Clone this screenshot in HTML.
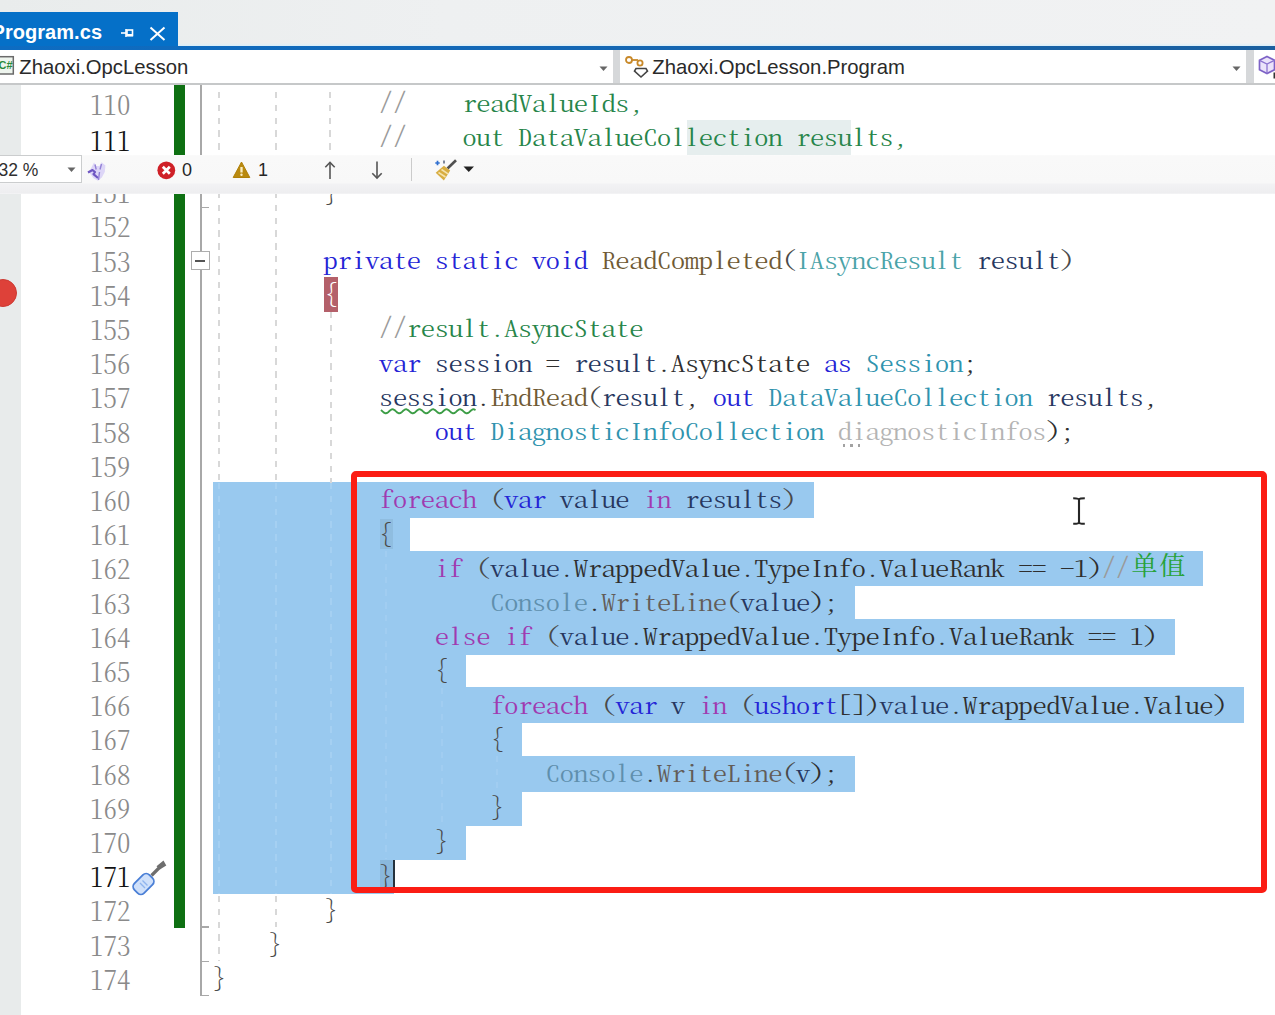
<!DOCTYPE html>
<html><head><meta charset="utf-8"><title>Program.cs</title>
<style>
html,body{margin:0;padding:0}
body{width:1275px;height:1015px;overflow:hidden;position:relative;background:#fff;font-family:"Liberation Sans","Noto Sans CJK SC",sans-serif}
.a{position:absolute}
.cl,.ln{position:absolute;white-space:pre;font-family:"Noto Serif CJK SC","Liberation Mono",monospace;font-feature-settings:"hwid";font-kerning:none;font-weight:300;font-size:23.0px;line-height:34.2px;height:34.2px;transform:scaleX(1.27000);transform-origin:0 0;letter-spacing:-0.5551px}
.cl{left:212.1px}
.sl{position:relative;top:-3px}
.cl i{font-style:normal;display:inline-block;transform:translateY(-0.8px) scaleY(0.91);transform-origin:0 0}
.br{display:inline-block;transform:translate(1.5px,-2.2px) scale(0.76,1.09);transform-origin:0 50%}
.ln{left:90.2px;color:#8a8a8a;font-size:26.0px;transform:scaleX(1.03462);letter-spacing:0}
.sel{position:absolute;background:#99c9ef}
.gd{position:absolute;width:2px}
</style></head><body>

<div class="a" style="left:0;top:0;width:1275px;height:46px;background:linear-gradient(90deg,#e9ecec 0%,#eef0f1 35%,#f1f2f3 100%)"></div>
<div class="a" style="left:0;top:12px;width:177.6px;height:35px;background:#0570c8"></div>
<div class="a" style="left:0;top:45.5px;width:1275px;height:4.5px;background:linear-gradient(90deg,#0d6cc2 0%,#1467b4 45%,#1a5f9f 100%)"></div>
<div class="a" style="left:-8.5px;top:17.5px;font-weight:bold;font-size:20px;line-height:28px;color:#fff;white-space:pre;letter-spacing:0.05px">Program.cs</div>
<div class="a" style="left:177.600px;top:42.500px;width:1098px;height:3px;background:linear-gradient(180deg,rgba(222,240,250,0) 0%,#d9eef9 100%)"></div>
<svg class="a" style="left:119px;top:25px" width="18" height="16" viewBox="0 0 18 16"><g fill="none" stroke="#fff" stroke-width="1.6"><path d="M2 8h5"/><path d="M7 4v8"/><rect x="8" y="5" width="5.5" height="5.5" fill="none"/><path d="M8 10.2h6" stroke-width="2.4"/></g></svg>
<svg class="a" style="left:149px;top:26px" width="18" height="16" viewBox="0 0 18 16"><g fill="none" stroke="#fff" stroke-width="2"><path d="M1.5 1.5l14 12.5M15.5 1.5l-14 12.5"/></g></svg>
<div class="a" style="left:0;top:49.5px;width:1275px;height:34px;background:#d6d8da"></div>
<div class="a" style="left:0;top:50px;width:612.6px;height:33px;background:#fff"></div>
<div class="a" style="left:619.5px;top:50px;width:626px;height:33px;background:#fff"></div>
<div class="a" style="left:1253.5px;top:50px;width:22px;height:33px;background:#fff"></div>
<div class="a" style="left:0;top:83px;width:1275px;height:2.2px;background:#c6c8c9"></div>
<svg class="a" style="left:-3.5px;top:55px" width="19" height="22" viewBox="0 0 19 22"><rect x="0.700" y="1.700" width="15.600" height="17.300" fill="#eef5ee" stroke="#6a6a6a" stroke-width="1.500"/><text x="1.500" y="14.200" font-family="Liberation Sans,sans-serif" font-weight="bold" font-size="11" fill="#2c8a3c">C#</text></svg>
<div class="a" id="nav1" style="left:19.3px;top:53px;font-size:20.3px;line-height:28px;color:#2a2a2a;white-space:pre;transform-origin:0 0">Zhaoxi.OpcLesson</div>
<div class="a" id="nav2" style="left:652.3px;top:53px;font-size:20.3px;line-height:28px;color:#2a2a2a;white-space:pre;transform-origin:0 0">Zhaoxi.OpcLesson.Program</div>
<svg class="a" style="left:598.3px;top:64.700px" width="12" height="8" viewBox="0 0 12 8"><path d="M1.5 1.5h8l-4 4.5z" fill="#666"/></svg>
<svg class="a" style="left:1231.300px;top:64.800px" width="12" height="8" viewBox="0 0 12 8"><path d="M1.5 1.5h8l-4 4.5z" fill="#666"/></svg>
<svg class="a" style="left:624px;top:54px" width="26" height="26" viewBox="0 0 26 26"><g fill="none" stroke="#c8892a" stroke-width="1.8"><circle cx="5" cy="6" r="3"/><path d="M8 6h6"/><circle cx="16" cy="9" r="2.6"/></g><path d="M12 14.5h10l1.5 2.5-6.5 6-6.500-6z" fill="#fff" stroke="#444" stroke-width="1.6"/></svg>
<svg class="a" style="left:1257.500px;top:55px" width="20" height="26" viewBox="0 0 20 26"><path d="M9 1.500l7.500 3.800v9.400l-7.500 3.800-7.500-3.800V5.300z" fill="#ebe3fa" stroke="#7d62c6" stroke-width="1.700"/><path d="M1.500 5.300l7.500 3.800 7.500-3.800M9 9.100v9.400" fill="none" stroke="#8d74d0" stroke-width="1.300"/><rect x="15.500" y="17.500" width="5" height="6" fill="#333"/></svg>
<div class="a" style="left:0;top:85px;width:20.500px;height:930px;background:#e8ebeb"></div>
<div class="sel" style="left:213.0px;top:482.2px;width:600.5px;height:35.8px"></div>
<div class="sel" style="left:213.0px;top:516.4px;width:197.4px;height:35.8px"></div>
<div class="sel" style="left:213.0px;top:550.6px;width:989.7px;height:35.8px"></div>
<div class="sel" style="left:213.0px;top:584.8px;width:642.2px;height:35.8px"></div>
<div class="sel" style="left:213.0px;top:619.0px;width:961.9px;height:35.8px"></div>
<div class="sel" style="left:213.0px;top:653.2px;width:253.0px;height:35.8px"></div>
<div class="sel" style="left:213.0px;top:687.4px;width:1031.4px;height:35.8px"></div>
<div class="sel" style="left:213.0px;top:721.6px;width:308.6px;height:35.8px"></div>
<div class="sel" style="left:213.0px;top:755.8px;width:642.2px;height:35.8px"></div>
<div class="sel" style="left:213.0px;top:790.0px;width:308.6px;height:35.8px"></div>
<div class="sel" style="left:213.0px;top:824.2px;width:253.0px;height:35.8px"></div>
<div class="sel" style="left:213.0px;top:858.4px;width:181.1px;height:35.8px"></div>
<div class="gd" style="left:217.5px;top:92.0px;height:60.0px;background:repeating-linear-gradient(180deg,#d8d8d8 0,#d8d8d8 6.4px,transparent 6.4px,transparent 12.8px)"></div>
<div class="gd" style="left:274.5px;top:92.0px;height:60.0px;background:repeating-linear-gradient(180deg,#d8d8d8 0,#d8d8d8 6.4px,transparent 6.4px,transparent 12.8px)"></div>
<div class="gd" style="left:329.0px;top:92.0px;height:60.0px;background:repeating-linear-gradient(180deg,#d8d8d8 0,#d8d8d8 6.4px,transparent 6.4px,transparent 12.8px)"></div>
<div class="gd" style="left:217.5px;top:192.0px;height:290.6px;background:repeating-linear-gradient(180deg,#d8d8d8 0,#d8d8d8 6.4px,transparent 6.4px,transparent 12.8px)"></div>
<div class="gd" style="left:217.5px;top:482.6px;height:411.6px;background:repeating-linear-gradient(180deg,#a5d0f2 0,#a5d0f2 6.4px,transparent 6.4px,transparent 12.8px)"></div>
<div class="gd" style="left:217.5px;top:896.2px;height:65.2px;background:repeating-linear-gradient(180deg,#d8d8d8 0,#d8d8d8 6.4px,transparent 6.4px,transparent 12.8px)"></div>
<div class="gd" style="left:274.5px;top:192.0px;height:290.6px;background:repeating-linear-gradient(180deg,#d8d8d8 0,#d8d8d8 6.4px,transparent 6.4px,transparent 12.8px)"></div>
<div class="gd" style="left:274.5px;top:482.6px;height:411.6px;background:repeating-linear-gradient(180deg,#a5d0f2 0,#a5d0f2 6.4px,transparent 6.4px,transparent 12.8px)"></div>
<div class="gd" style="left:274.5px;top:896.2px;height:31.0px;background:repeating-linear-gradient(180deg,#d8d8d8 0,#d8d8d8 6.4px,transparent 6.4px,transparent 12.8px)"></div>
<div class="gd" style="left:329.5px;top:311.6px;height:171.0px;background:repeating-linear-gradient(180deg,#d8d8d8 0,#d8d8d8 6.4px,transparent 6.4px,transparent 12.8px)"></div>
<div class="gd" style="left:329.5px;top:482.6px;height:411.6px;background:repeating-linear-gradient(180deg,#a5d0f2 0,#a5d0f2 6.4px,transparent 6.4px,transparent 12.8px)"></div>
<div class="gd" style="left:385.0px;top:551.0px;height:307.8px;background:repeating-linear-gradient(180deg,#a1cdf1 0,#a1cdf1 6.4px,transparent 6.4px,transparent 12.8px)"></div>
<div class="gd" style="left:440.5px;top:687.8px;height:136.8px;background:repeating-linear-gradient(180deg,#a1cdf1 0,#a1cdf1 6.4px,transparent 6.4px,transparent 12.8px)"></div>
<div class="gd" style="left:496.0px;top:756.2px;height:34.2px;background:repeating-linear-gradient(180deg,#a1cdf1 0,#a1cdf1 6.4px,transparent 6.4px,transparent 12.8px)"></div>
<div class="a" style="left:174.400px;top:85.300px;width:10.400px;height:70px;background:#0e7012"></div>
<div class="a" style="left:174.400px;top:191px;width:10.400px;height:736.900px;background:#0e7012"></div>
<div class="a" style="left:199.500px;top:85.300px;width:2.200px;height:70px;background:#a8a8a8"></div>
<div class="a" style="left:199.5px;top:191px;width:2.2px;height:805.1px;background:#a8a8a8"></div>
<div class="a" style="left:200px;top:206.5px;width:9px;height:1.7px;background:#a8a8a8"></div>
<div class="a" style="left:200px;top:926.4px;width:9px;height:1.7px;background:#a8a8a8"></div>
<div class="a" style="left:200px;top:960.6px;width:9px;height:1.7px;background:#a8a8a8"></div>
<div class="a" style="left:200px;top:994.8px;width:9px;height:1.7px;background:#a8a8a8"></div>
<div class="a" style="left:191px;top:250.7px;width:16.6px;height:17.2px;background:#fff;border:1.5px solid #adadad"></div>
<div class="a" style="left:194.5px;top:259.6px;width:10.8px;height:2.2px;background:#555"></div>
<div class="a" style="left:323.5px;top:277.4px;width:14.5px;height:34.2px;background:#b4606a"></div>
<div class="a" style="left:687px;top:120px;width:164px;height:35px;background:#e6eeee"></div>
<div class="a" style="left:379.500px;top:860.3px;width:13.500px;height:31.2px;background:#8ab8dc"></div>
<div class="a" style="left:379.500px;top:518.8px;width:13.500px;height:30.2px;background:#8fbde0"></div>
<div class="cl" style="top:85.95px">            <span class="sl" style="color:#9a9a9a">//</span><span style="color:#27854a">    readValueIds,</span></div>
<div class="cl" style="top:120.15px">            <span class="sl" style="color:#9a9a9a">//</span><span style="color:#27854a">    out DataValueCollection results,</span></div>
<div class="cl" style="top:174.55px">        <span class="br" style="color:#4a4a4a">}</span></div>
<div class="cl" style="top:242.95px"><span style="color:#2424d6">        private static void </span><span style="color:#6f5a34">ReadCompleted</span><span style="color:#4a4a4a"><i>(</i></span><span style="color:#4aa3a8">IAsyncResult</span><span style="color:#27375f"> result</span><span style="color:#4a4a4a"><i>)</i></span></div>
<div class="cl" style="top:277.15px">        <span class="br" style="color:#ffffff">{</span></div>
<div class="cl" style="top:311.35px">            <span class="sl" style="color:#9a9a9a">//</span><span style="color:#27854a">result.AsyncState</span></div>
<div class="cl" style="top:345.55px"><span style="color:#2424d6">            var </span><span style="color:#27375f">session</span><span style="color:#2e2e2e"> = </span><span style="color:#27375f">result</span><span style="color:#2e2e2e">.AsyncState </span><span style="color:#2424d6">as </span><span style="color:#2f93ae">Session</span><span style="color:#2e2e2e">;</span></div>
<div class="cl" style="top:379.75px"><span style="color:#27375f">            session</span><span style="color:#2e2e2e">.</span><span style="color:#6f5a34">EndRead</span><span style="color:#4a4a4a"><i>(</i></span><span style="color:#27375f">result</span><span style="color:#2e2e2e">, </span><span style="color:#2424d6">out </span><span style="color:#2f93ae">DataValueCollection </span><span style="color:#27375f">results</span><span style="color:#2e2e2e">,</span></div>
<div class="cl" style="top:413.95px"><span style="color:#2424d6">                out </span><span style="color:#2f93ae">DiagnosticInfoCollection </span><span style="color:#b4b4b4">diagnosticInfos</span><span style="color:#2e2e2e"><i>)</i>;</span></div>
<div class="cl" style="top:482.35px"><span style="color:#a03ab0">            foreach </span><span style="color:#4a4a4a"><i>(</i></span><span style="color:#2424d6">var </span><span style="color:#27375f">value </span><span style="color:#a03ab0">in </span><span style="color:#27375f">results</span><span style="color:#4a4a4a"><i>)</i></span></div>
<div class="cl" style="top:516.55px">            <span class="br" style="color:#4a4a4a">{</span></div>
<div class="cl" style="top:550.75px"><span style="color:#a03ab0">                if </span><span style="color:#4a4a4a"><i>(</i></span><span style="color:#27375f">value</span><span style="color:#2e2e2e">.WrappedValue.TypeInfo.ValueRank == -1<i>)</i></span><span class="sl" style="color:#9a9a9a">//</span></div>
<div class="cl" style="top:584.95px"><span style="color:#5f8fad">                    Console</span><span style="color:#2e2e2e">.</span><span style="color:#625c58">WriteLine</span><span style="color:#4a4a4a"><i>(</i></span><span style="color:#27375f">value</span><span style="color:#2e2e2e"><i>)</i>;</span></div>
<div class="cl" style="top:619.15px"><span style="color:#a03ab0">                else if </span><span style="color:#4a4a4a"><i>(</i></span><span style="color:#27375f">value</span><span style="color:#2e2e2e">.WrappedValue.TypeInfo.ValueRank == 1<i>)</i></span></div>
<div class="cl" style="top:653.35px">                <span class="br" style="color:#4a4a4a">{</span></div>
<div class="cl" style="top:687.55px"><span style="color:#a03ab0">                    foreach </span><span style="color:#4a4a4a"><i>(</i></span><span style="color:#2424d6">var </span><span style="color:#27375f">v </span><span style="color:#a03ab0">in </span><span style="color:#4a4a4a"><i>(</i></span><span style="color:#2424d6">ushort</span><span style="color:#2e2e2e"><i>[])</i></span><span style="color:#27375f">value</span><span style="color:#2e2e2e">.WrappedValue.Value<i>)</i></span></div>
<div class="cl" style="top:721.75px">                    <span class="br" style="color:#4a4a4a">{</span></div>
<div class="cl" style="top:755.95px"><span style="color:#5f8fad">                        Console</span><span style="color:#2e2e2e">.</span><span style="color:#625c58">WriteLine</span><span style="color:#4a4a4a"><i>(</i></span><span style="color:#27375f">v</span><span style="color:#2e2e2e"><i>)</i>;</span></div>
<div class="cl" style="top:790.15px">                    <span class="br" style="color:#4a4a4a">}</span></div>
<div class="cl" style="top:824.35px">                <span class="br" style="color:#4a4a4a">}</span></div>
<div class="cl" style="top:858.55px">            <span class="br" style="color:#4a4a4a">}</span></div>
<div class="cl" style="top:892.75px">        <span class="br" style="color:#4a4a4a">}</span></div>
<div class="cl" style="top:926.95px">    <span class="br" style="color:#4a4a4a">}</span></div>
<div class="cl" style="top:961.15px"><span class="br" style="color:#4a4a4a">}</span></div>
<div class="a" style="left:1131.5px;top:550.0px;font-family:'Liberation Serif','Noto Serif CJK SC',serif;font-size:26px;line-height:34.2px;color:#28a23a;white-space:pre;letter-spacing:1.7px">单值</div>
<div class="ln" style="top:86.55px">110</div>
<div class="ln" style="top:122.75px;color:#111">111</div>
<div class="ln" style="top:175.25px">151</div>
<div class="ln" style="top:209.45px">152</div>
<div class="ln" style="top:243.65px">153</div>
<div class="ln" style="top:277.85px">154</div>
<div class="ln" style="top:312.05px">155</div>
<div class="ln" style="top:346.25px">156</div>
<div class="ln" style="top:380.45px">157</div>
<div class="ln" style="top:414.65px">158</div>
<div class="ln" style="top:448.85px">159</div>
<div class="ln" style="top:483.05px">160</div>
<div class="ln" style="top:517.25px">161</div>
<div class="ln" style="top:551.45px">162</div>
<div class="ln" style="top:585.65px">163</div>
<div class="ln" style="top:619.85px">164</div>
<div class="ln" style="top:654.05px">165</div>
<div class="ln" style="top:688.25px">166</div>
<div class="ln" style="top:722.45px">167</div>
<div class="ln" style="top:756.65px">168</div>
<div class="ln" style="top:790.85px">169</div>
<div class="ln" style="top:825.05px">170</div>
<div class="ln" style="top:859.25px;color:#111">171</div>
<div class="ln" style="top:893.45px">172</div>
<div class="ln" style="top:927.65px">173</div>
<div class="ln" style="top:961.85px">174</div>
<svg class="a" style="left:379.700px;top:407.0px" width="98" height="9" viewBox="0 0 98 9"><polyline points="1.0,3.05 2.5,4.42 4.0,5.74 5.5,6.39 7.0,6.05 8.5,4.90 10.0,3.47 11.5,2.42 13.0,2.26 14.5,3.05 16.0,4.42 17.5,5.74 19.0,6.39 20.5,6.05 22.0,4.90 23.5,3.47 25.0,2.42 26.5,2.26 28.0,3.05 29.5,4.42 31.0,5.74 32.5,6.39 34.0,6.05 35.5,4.90 37.0,3.47 38.5,2.42 40.0,2.26 41.5,3.05 43.0,4.42 44.5,5.74 46.0,6.39 47.5,6.05 49.0,4.90 50.5,3.47 52.0,2.42 53.5,2.26 55.0,3.05 56.5,4.42 58.0,5.74 59.5,6.39 61.0,6.05 62.5,4.90 64.0,3.47 65.5,2.42 67.0,2.26 68.5,3.05 70.0,4.42 71.5,5.74 73.0,6.39 74.5,6.05 76.0,4.90 77.5,3.47 79.0,2.42 80.5,2.26 82.0,3.05 83.5,4.42 85.0,5.74 86.5,6.39 88.0,6.05 89.5,4.90 91.0,3.47 92.5,2.42 94.0,2.26 95.5,3.05" fill="none" stroke="#3c9d46" stroke-width="1.900" stroke-linejoin="round"/></svg>
<div class="a" style="left:842.6px;top:444.2px;width:2.6px;height:2.4px;background:#a2a2a2"></div>
<div class="a" style="left:850.1px;top:444.2px;width:2.6px;height:2.4px;background:#a2a2a2"></div>
<div class="a" style="left:857.6px;top:444.2px;width:2.6px;height:2.4px;background:#a2a2a2"></div>
<div class="a" style="left:393px;top:859.8px;width:2.400px;height:31.2px;background:#26323c"></div>
<div class="a" style="left:351px;top:471px;width:916px;height:422px;border:6px solid #fb1d14;border-radius:5px;box-sizing:border-box"></div>
<svg class="a" style="left:1071px;top:495.500px" width="16" height="30" viewBox="0 0 16 30"><g fill="none" stroke="#262626" stroke-width="2.100"><path d="M8 3v24"/><path d="M2.200 2.200c3.300 0 5.800 .2 5.800 1.600 0-1.400 2.500-1.600 5.800-1.600"/><path d="M2.200 27.800c3.300 0 5.800-.2 5.800-1.600 0 1.400 2.500 1.600 5.800 1.600"/></g></svg>
<div class="a" style="left:-11.300px;top:278.800px;width:26.200px;height:26.200px;border-radius:50%;background:#de4139;border:1px solid #cc3a33"></div>
<svg class="a" style="left:130px;top:856px" width="40" height="42" viewBox="0 0 40 42"><path d="M21.500 19.500L31 10" stroke="#6e6e6e" stroke-width="3.200" fill="none"/><path d="M33.500 4.500l2.800 5-6.500 4-3.300-3.300z" fill="#6e6e6e"/><rect x="-6.800" y="-10.500" width="13.600" height="21" rx="4.500" transform="translate(13.500 28) rotate(45)" fill="#cfe0fa" stroke="#4a7fd6" stroke-width="1.800"/><path d="M10 27l5 5M12.500 24.500l5 5" stroke="#8fb4ee" stroke-width="1.400" fill="none"/></svg>
<div class="a" style="left:0;top:154.700px;width:1275px;height:39.300px;background:linear-gradient(180deg,#fbfbfb 0,#f9f9f9 1.500px,#f8f8f8 27.500px,#f2f2f4 29.500px,#eeeef0 37.500px,#f6f6f7 39.300px)"></div>
<div class="a" style="left:-2px;top:155.300px;width:82px;height:26.200px;background:#fff;border:1.300px solid #cbcdce"></div>
<div class="a" style="left:-1.5px;top:158px;font-size:17.5px;line-height:24px;color:#303030;white-space:pre">32 %</div>
<svg class="a" style="left:66px;top:166px" width="12" height="8" viewBox="0 0 12 8"><path d="M1.500 1.500h8l-4 4.500z" fill="#666"/></svg>
<svg class="a" style="left:85.500px;top:159.500px" width="24" height="24" viewBox="0 0 24 24"><path d="M8 2.500l2.200 3.500h3.200l2.200-3.800 3.800 3.300-.6 6.500-3 5.500-3.800 3.200-4.500-2.500-4.500-6 1.500-3z" fill="#ddd6f7"/><path d="M2 12.500l4.500-2.500 2.500 2-1.500 2.200 4.500 3.800" fill="none" stroke="#6f56c2" stroke-width="2.200" stroke-linejoin="round"/><path d="M13.500 12l-1 8M9 4.500l1.200 5M15.500 4l-1.500 5.500" stroke="#9381d6" stroke-width="1.400" fill="none"/></svg>
<svg class="a" style="left:154.500px;top:159.500px" width="22" height="22" viewBox="0 0 22 22"><circle cx="11.300" cy="10.300" r="8.900" fill="#cf2027"/><path d="M7.800 6.800l7 7M14.800 6.800l-7 7" stroke="#fff" stroke-width="2.700" fill="none"/></svg>
<div class="a" style="left:182px;top:158px;font-size:18px;line-height:24px;color:#262626">0</div>
<svg class="a" style="left:230px;top:159px" width="22" height="21" viewBox="0 0 22 21"><path d="M11.500 3l8.300 15.500h-16.600z" fill="#b98a10" stroke="#b08008" stroke-width="1" stroke-linejoin="round"/><path d="M11.500 8v5.500" stroke="#fbeec4" stroke-width="2.300"/><circle cx="11.500" cy="15.800" r="1.200" fill="#fbeec4"/></svg>
<div class="a" style="left:258px;top:158px;font-size:18px;line-height:24px;color:#262626">1</div>
<svg class="a" style="left:321px;top:159px" width="18" height="22" viewBox="0 0 18 22"><g fill="none" stroke="#555" stroke-width="1.600"><path d="M9 20V3.500"/><path d="M4.300 8.200l4.700-4.700 4.700 4.700"/></g></svg>
<svg class="a" style="left:368px;top:159px" width="18" height="22" viewBox="0 0 18 22"><g fill="none" stroke="#555" stroke-width="1.600"><path d="M9 2.500v16.500"/><path d="M4.300 14.300l4.700 4.700 4.700-4.700"/></g></svg>
<div class="a" style="left:410.900px;top:158px;width:1.600px;height:23px;background:#cbcbcb"></div>
<svg class="a" style="left:432px;top:158px" width="28" height="26" viewBox="0 0 28 26"><path d="M15.500 10.500l8.500-8.300" stroke="#505050" stroke-width="2.600" fill="none"/><path d="M3.700 14.700l8.200-7 6.300 4.700-6.300 10.200z" fill="#d8ad40"/><path d="M6.500 14.500l7 4.500M9.500 11.500l6.500 4.300" stroke="#f4e3ae" stroke-width="1.500" fill="none"/><path d="M5.500 2.800v4.400M3.300 5h4.400" stroke="#2f6fd0" stroke-width="1.700"/><path d="M12 2.500v3" stroke="#55607a" stroke-width="1.500"/></svg>
<svg class="a" style="left:462px;top:165px" width="14" height="9" viewBox="0 0 14 9"><path d="M1.500 1.500h10.500l-5.250 5.500z" fill="#222"/></svg>
</body></html>
